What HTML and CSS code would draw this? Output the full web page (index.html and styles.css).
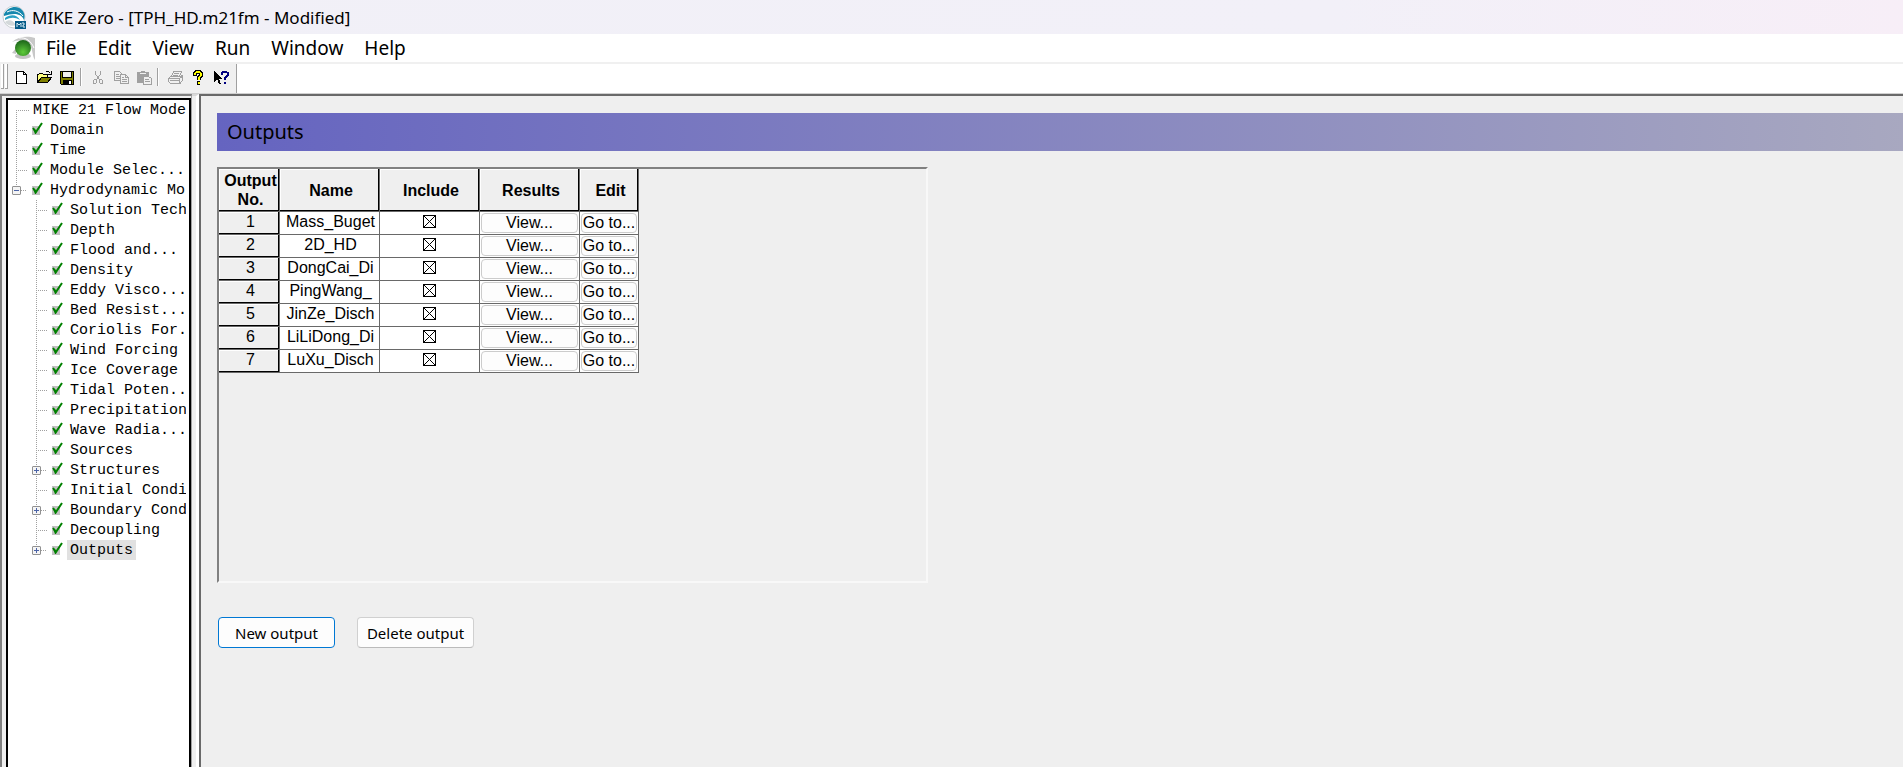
FILE: index.html
```
<!DOCTYPE html>
<html lang="en">
<head>
<meta charset="utf-8">
<title>MIKE Zero - [TPH_HD.m21fm - Modified]</title>
<meta name="viewport" content="width=device-width, initial-scale=1.0">
<link rel="stylesheet" href="styles.css">
</head>
<body>

<header class="titlebar">
	<svg class="app-icon" width="24" height="24" viewBox="0 0 24 24">
		<circle cx="12" cy="12" r="11" fill="#fff" stroke="#c9ced2"/>
		<path d="M2 9C6 1 16 0 20 5C23 8 23 12 22 15C20 9 13 7 2 11Z" fill="#1687ad"/>
		<path d="M3 13C8 9 15 9 18 15C13 12 9 12 3 15Z" fill="#2aa0c4"/>
		<path d="M5 7C11 4 17 6 21 11" fill="none" stroke="#fff"/>
		<path d="M3 17C7 14 11 15 14 20C10 22 5 20 3 17Z" fill="#d3d8da"/>
		<rect x="13" y="16" width="11" height="8" fill="#075b87"/>
		<path d="M15 22V18L17 20L19 18V22M20 18H22V20H21V22H23" fill="none" stroke="#d9edf5"/>
	</svg>
	<span>MIKE Zero - [TPH_HD.m21fm - Modified]</span>
</header>

<nav class="menubar">
	<svg class="doc-icon" width="24" height="24" viewBox="0 0 24 24">
		<defs>
			<radialGradient id="ball" cx="50%" cy="75%" r="70%">
				<stop offset="0" stop-color="#5ecb3a"/>
				<stop offset="1" stop-color="#1f6a1b"/>
			</radialGradient>
		</defs>
		<path d="M1 6C8 0 17 0 24 2V24C21 20 22 12 18 8C13 3 7 4 1 6Z" fill="#c8c8c8"/>
		<path d="M8 2C15 1 20 5 23 12" fill="none" stroke="#fff"/>
		<path d="M1 17L5 12V18Z" fill="#c8c8c8"/>
		<ellipse cx="12" cy="20" rx="8" ry="3" fill="#c4c4c4"/>
		<circle cx="12" cy="12" r="8" fill="url(#ball)"/>
	</svg>
	<a href="#">File</a>
	<a href="#">Edit</a>
	<a href="#">View</a>
	<a href="#">Run</a>
	<a href="#">Window</a>
	<a href="#">Help</a>
</nav>

<div class="toolrow">
	<div class="toolbar">
		<i class="grip"></i><i class="grip"></i>
		<button aria-label="New"><svg viewBox="0 0 16 16"><path d="M3.500 2.500H10.500L13.500 5.500V14.500H3.500ZM10.500 2.500V5.500H13.500" fill="#fff" stroke="#000"/></svg></button>
		<button aria-label="Open"><svg viewBox="0 0 16 16"><path d="M1.500 13.500V5.500H2.500L3.500 4.500H6.500L7.500 5.500H11.500V8.500" fill="#ffff80" stroke="#000"/><path d="M1.500 13.500L5.500 8.500H15.500L11.500 13.500Z" fill="#808000" stroke="#000"/><path d="M9.500 3.500L10.500 2.500H12.500L14.500 4.500M15.500 2V5.500H12" fill="none" stroke="#000"/></svg></button>
		<button aria-label="Save"><svg viewBox="0 0 16 16"><path d="M1.500 2.500H14.500V15.500H2.500L1.500 14.500Z" fill="#808000" stroke="#000"/><path d="M4 3H12V9H4Z" fill="#f0f0f0"/><path d="M3.500 3V8.500H12.500V3" fill="none" stroke="#000"/><path d="M4 11H13V15H4Z"/><path d="M10 12H12V15H10Z" fill="#fff"/></svg></button>
		<i class="sep"></i>
		<button aria-label="Cut"><svg viewBox="0 0 16 16"><path d="M5.500 2V5L9.500 10.500M10.500 2V5L6.500 10.500M4.500 10.500H6.500V13.500L5.500 14.500H3.500V11.500ZM9.500 10.500H11.500L12.500 11.500V14.500H10.500L9.500 13.500Z" fill="none" stroke="#a0a0a0"/></svg></button>
		<button aria-label="Copy"><svg viewBox="0 0 16 16"><path d="M1.500 2.500H6.500L8.500 4.500V11.500H1.500ZM3 5.500H6M3 7.500H7M3 9.500H7" fill="#f0f0f0" stroke="#a0a0a0"/><path d="M7.500 5.500H12.500L15.500 8.500V14.500H7.500ZM12.500 5.500V8.500H15.500M9 8.500H11M9 10.500H14M9 12.500H14" fill="#f0f0f0" stroke="#a0a0a0"/></svg></button>
		<button aria-label="Paste"><svg viewBox="0 0 16 16"><path d="M1 3H5V2H9V3H13V14H1Z" fill="#a0a0a0"/><path d="M4 4.500H10" stroke="#f0f0f0"/><path d="M7.500 7.500H12.500L15.500 9.500V15.500H7.500ZM9 10.500H13M9 12.500H14" fill="#f0f0f0" stroke="#a0a0a0"/></svg></button>
		<i class="sep"></i>
		<button aria-label="Print"><svg viewBox="0 0 16 16"><path d="M4.500 7.500L6.500 2.500H14.500L12.500 7.500M7 4.500H12M6 6.500H11M3.500 7.500H13.500L15.500 6.500V11.500L13.500 13.500V14.500H3.500L1.500 12.500V9.500ZM1.500 9.500H12.500L15.500 7.500M12.500 9.500V14M3 11.500H12" fill="none" stroke="#a0a0a0"/></svg></button>
		<button aria-label="Help"><svg viewBox="0 0 16 16"><path d="M5 7V4.500L6.500 3H9.500L11 4.500V6.500L8.500 9V11M7 13.500H10" fill="none" stroke="#000" stroke-width="4"/><path d="M5 6V4.500L6.500 3H9.500L11 4.500V6.500L8.500 9V10.500M7.500 13.500H9.500" fill="none" stroke="#ffff00" stroke-width="2"/></svg></button>
		<button aria-label="Context help"><svg viewBox="0 0 16 16"><path d="M1 2V13L4 10L6 15H8L6 10H9Z"/><path d="M9 6V4L10 3H13L15 4V6L12 9V11M11 13.500H13" fill="none" stroke="#000080" stroke-width="2"/></svg></button>
	</div>
</div>

<div class="workspace">
	<aside class="tree-pane">
		<div class="tree-box">
			<ul class="tree">
				<li><div class="row"><i class="dots root"></i><span class="label">MIKE 21 Flow Mode</span></div></li>
				<li><div class="row"><i class="dots"></i><i class="check"></i><span class="label">Domain</span></div></li>
				<li><div class="row"><i class="dots"></i><i class="check"></i><span class="label">Time</span></div></li>
				<li><div class="row"><i class="dots"></i><i class="check"></i><span class="label">Module Selec...</span></div></li>
				<li>
					<div class="row"><button class="expander" aria-label="Collapse"></button><i class="dots"></i><i class="check"></i><span class="label">Hydrodynamic Mo</span></div>
					<ul>
						<li><div class="row"><i class="dots"></i><i class="check"></i><span class="label">Solution Tech</span></div></li>
						<li><div class="row"><i class="dots"></i><i class="check"></i><span class="label">Depth</span></div></li>
						<li><div class="row"><i class="dots"></i><i class="check"></i><span class="label">Flood and...</span></div></li>
						<li><div class="row"><i class="dots"></i><i class="check"></i><span class="label">Density</span></div></li>
						<li><div class="row"><i class="dots"></i><i class="check"></i><span class="label">Eddy Visco...</span></div></li>
						<li><div class="row"><i class="dots"></i><i class="check"></i><span class="label">Bed Resist...</span></div></li>
						<li><div class="row"><i class="dots"></i><i class="check"></i><span class="label">Coriolis For.</span></div></li>
						<li><div class="row"><i class="dots"></i><i class="check"></i><span class="label">Wind Forcing</span></div></li>
						<li><div class="row"><i class="dots"></i><i class="check"></i><span class="label">Ice Coverage</span></div></li>
						<li><div class="row"><i class="dots"></i><i class="check"></i><span class="label">Tidal Poten..</span></div></li>
						<li><div class="row"><i class="dots"></i><i class="check"></i><span class="label">Precipitation</span></div></li>
						<li><div class="row"><i class="dots"></i><i class="check"></i><span class="label">Wave Radia...</span></div></li>
						<li><div class="row"><i class="dots"></i><i class="check"></i><span class="label">Sources</span></div></li>
						<li><div class="row"><button class="expander plus" aria-label="Expand"></button><i class="dots"></i><i class="check"></i><span class="label">Structures</span></div></li>
						<li><div class="row"><i class="dots"></i><i class="check"></i><span class="label">Initial Condi</span></div></li>
						<li><div class="row"><button class="expander plus" aria-label="Expand"></button><i class="dots"></i><i class="check"></i><span class="label">Boundary Cond</span></div></li>
						<li><div class="row"><i class="dots"></i><i class="check"></i><span class="label">Decoupling</span></div></li>
						<li><div class="row"><button class="expander plus" aria-label="Expand"></button><i class="dots"></i><i class="check"></i><span class="label selected">Outputs</span></div></li>
					</ul>
				</li>
			</ul>
		</div>
	</aside>
	<div class="splitter"></div>

	<main class="content">
		<h1>Outputs</h1>
		<div class="grid-frame">
			<table>
				<colgroup><col class="c-no"><col class="c-std"><col class="c-std"><col class="c-std"><col class="c-edit"></colgroup>
				<thead>
					<tr><th>Output No.</th><th>Name</th><th>Include</th><th>Results</th><th>Edit</th></tr>
				</thead>
				<tbody id="rows"></tbody>
			</table>
		</div>
		<div class="actions">
			<button class="default">New output</button>
			<button>Delete output</button>
		</div>
	</main>
</div>

<script src="script.js"></script>
</body>
</html>
```
FILE: styles.css
```
* {
	box-sizing: border-box;
}

body {
	margin: 0;
	height: 100vh;
	display: flex;
	flex-direction: column;
	overflow: hidden;
	background-color: #efefef;
	color: #000;
	font-family: "Noto Sans", "Open Sans", sans-serif;
}

button {
	margin: 0;
	padding: 0;
	border: 0;
	background: none;
	color: #000;
}

/* title and menu */

.titlebar {
	display: flex;
	align-items: center;
	gap: 6px;
	height: 34px;
	padding: 0 2px;
	background: linear-gradient(to right, #f1f0f7, #f2f0f8 70%, #f7eef7);
	font-size: 17px;
}

.menubar {
	display: flex;
	align-items: center;
	gap: 21px;
	height: 30px;
	padding-left: 11px;
	background-color: #fff;
	border-bottom: 2px solid #f0f0f0;
	font-size: 19px;
}

.doc-icon {
	margin-right: -10px;
}

.menubar a {
	color: #000;
	text-decoration: none;
}

/* toolbar */

.toolrow {
	height: 29px;
	background-color: #fff;
}

.toolbar {
	display: flex;
	align-items: center;
	width: 237px;
	height: 29px;
	padding: 0 0 4px 1px;
	background-color: #f0f0f0;
	border-right: 1px solid #a0a0a0;
}

.toolbar button {
	width: 23px;
	height: 22px;
	display: flex;
	align-items: center;
	justify-content: center;
}

.toolbar svg {
	width: 16px;
	height: 16px;
	shape-rendering: crispEdges;
}

.grip {
	width: 3px;
	height: 25px;
	margin-right: 1px;
	background-color: #fff;
	border-right: 1px solid #a0a0a0;
	border-bottom: 1px solid #a0a0a0;
}

.sep {
	width: 2px;
	height: 18px;
	margin: 0 4px 0 2px;
	background-color: #fff;
	border-left: 1px solid #a0a0a0;
}

/* tree */

.workspace {
	flex: 1;
	display: flex;
	min-height: 0;
	border-top: 1px solid #d0d0d0;
}

.tree-pane {
	width: 192px;
	padding: 2px 0 0 4px;
	border-top: 2px solid #808080;
	border-left: 2px solid #808080;
	border-right: 1px solid #a0a0a0;
}

.tree-box {
	height: 100%;
	overflow: hidden;
	background-color: #fff;
	border: solid #000;
	border-width: 2px 2px 0;
	font-family: "Liberation Mono", monospace;
	font-size: 15px;
	line-height: 20px;
}

.tree {
	overflow: hidden;
	margin-right: 3px;
	padding-left: 8px;
}

.tree,
.tree ul {
	margin-top: 0;
	margin-bottom: 0;
	list-style: none;
	background: repeating-linear-gradient(#a0a0a0 0 1px, transparent 1px 2px) no-repeat;
	background-size: 1px 80px;
	background-position: 8px 10px;
}

.tree ul {
	margin-left: 20px;
	padding: 0;
	background-size: 1px 352px;
	background-position: 0 0;
}

.row {
	display: flex;
	align-items: center;
	height: 20px;
	white-space: nowrap;
}

.dots {
	flex: none;
	width: 11px;
	height: 1px;
	margin-right: 5px;
	background: repeating-linear-gradient(to right, #a0a0a0 0 1px, transparent 1px 2px);
}

.dots.root {
	width: 14px;
	margin-right: 0;
}

.expander {
	flex: none;
	width: 9px;
	height: 9px;
	margin-left: -4px;
	border: 1px solid #919191;
	border-radius: 1px;
	background: linear-gradient(#4b63a7, #4b63a7) center / 5px 1px no-repeat, #f4f4f4;
}

.expander.plus {
	background: linear-gradient(#4b63a7, #4b63a7) center / 5px 1px no-repeat, linear-gradient(#4b63a7, #4b63a7) center / 1px 5px no-repeat, #f4f4f4;
}

.expander + .dots {
	width: 6px;
}

.check {
	flex: none;
	display: flex;
	width: 11px;
	height: 16px;
	margin-right: 4px;
}

.label {
	height: 20px;
	padding: 2px 3px 0;
	line-height: 18px;
}

.selected {
	background-color: #e1e1e1;
}

.splitter {
	width: 7px;
	border-top: 2px solid #d8d8d8;
	border-right: 3px solid #fff;
}

/* right side */

.content {
	flex: 1;
	min-width: 0;
	padding: 17px 0 0 16px;
	border-top: 2px solid #696969;
	border-left: 2px solid #696969;
}

h1 {
	height: 38px;
	margin: 0 0 16px;
	padding-left: 10px;
	background: linear-gradient(to right, #6564c0, #a8a8c0);
	font-size: 20px;
	font-weight: normal;
	line-height: 38px;
}

.grid-frame {
	width: 711px;
	height: 416px;
	border: 2px solid;
	border-color: #808080 #f8f8f8 #f8f8f8 #808080;
}

table {
	width: 420px;
	table-layout: fixed;
	border-collapse: separate;
	border-spacing: 0;
	font: 16px/19px "Liberation Sans", Arial, sans-serif;
	text-align: center;
}

.c-no {
	width: 61px;
}

.c-std {
	width: 100px;
}

.c-edit {
	width: 59px;
}

th,
td {
	height: 23px;
	padding: 0;
	border-right: 1px solid #696969;
	border-bottom: 1px solid #696969;
	background-color: #fff;
	white-space: nowrap;
}

th {
	padding: 0 0 3px 3px;
	background-color: #efefef;
	box-shadow: inset -1px -1px #000, inset 1px 1px #fff;
	font-weight: normal;
}

thead th {
	height: 43px;
	padding-bottom: 0;
	font-weight: bold;
	white-space: normal;
}

td.name {
	padding: 0 0 3px 2px;
}

td.include {
	padding-bottom: 3px;
}

td input {
	display: block;
	appearance: none;
	width: 13px;
	height: 13px;
	margin: 0 auto;
	border: 1px solid #000;
	background-color: #fff;
}

td input:checked {
	background-image: linear-gradient(45deg, transparent 46%, #000 46% 54%, transparent 54%), linear-gradient(-45deg, transparent 46%, #000 46% 54%, transparent 54%);
}

td button {
	display: block;
	width: calc(100% - 2px);
	height: 20px;
	margin: 0 auto;
	border: 1px solid #ccc;
	border-radius: 4px;
	background-color: #fdfdfd;
	font: 16px/18px "Liberation Sans", Arial, sans-serif;
}

.actions {
	display: flex;
	gap: 22px;
	margin: 34px 0 0 1px;
}

.actions button {
	width: 117px;
	height: 31px;
	border: 1px solid #d0d0d0;
	border-bottom-color: #bbb;
	border-radius: 4px;
	background-color: #fdfdfd;
	font: 15px "Noto Sans", "Open Sans", sans-serif;
}

.actions .default {
	border-color: #0078d4;
}
```
FILE: script.js
```
var outputs = ["Mass_Buget", "2D_HD", "DongCai_Di", "PingWang_", "JinZe_Disch", "LiLiDong_Di", "LuXu_Disch"];
var rows = document.getElementById("rows");

outputs.forEach(function(name, i){
	var tr = document.createElement("tr");
	tr.innerHTML = "<th>" + (i + 1) + "</th><td class='name'>" + name + "</td>" +
		"<td class='include'><input type='checkbox' checked aria-label='Include " + name + "'></td>" +
		"<td><button>View...</button></td><td><button>Go to...</button></td>";
	rows.appendChild(tr);
});

// green tick in front of every tree item
document.querySelectorAll(".check").forEach(function(el){
	el.innerHTML = "<svg width='11' height='13' viewBox='0 0 11 13'><rect x='0' y='4' width='8' height='9' fill='#c0c0c0'/><path d='M1 6L4 10L10 1' fill='none' stroke='#008000' stroke-width='2'/><path d='M1 7H3L4 9V12H3Z' fill='#008000'/></svg>";
});
```
